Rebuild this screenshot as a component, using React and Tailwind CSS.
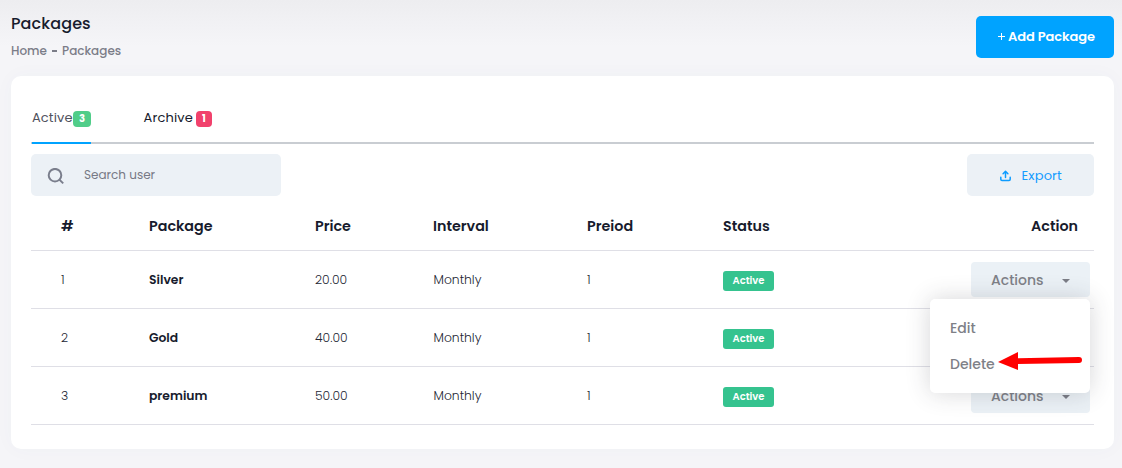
const rows = [
  { id: '1', name: 'Silver', price: '20.00' },
  { id: '2', name: 'Gold', price: '40.00' },
  { id: '3', name: 'premium', price: '50.00' },
];

const grid = 'grid grid-cols-[118px_166px_118px_154px_136px_1fr_auto] items-center border-b border-[#dfdfe6]';

function SearchIcon() {
  return (
    <svg width="18" height="18" viewBox="0 0 18 18" fill="none" stroke="#7a7e8c" strokeWidth="2">
      <circle cx="8" cy="7.2" r="6.3" />
      <path d="M12.4 11.6L16.2 15.4" />
    </svg>
  );
}

function UploadIcon() {
  return (
    <svg width="12" height="12" viewBox="0 0 12 12" fill="none" stroke="#0d9cff" strokeWidth="1.5" strokeLinecap="round" strokeLinejoin="round">
      <path d="M5.5 7.6V1.8M3.1 3.7L5.5 1.3L7.9 3.7" />
      <path d="M0.8 7.2V9.2Q0.8 10.4 2 10.4H9Q10.2 10.4 10.2 9.2V7.2" />
    </svg>
  );
}

function ActionsButton() {
  return (
    <button className="mr-1 flex h-[35px] w-[119px] items-center rounded bg-[#ebf1f6] pt-px pl-5 text-[14px] font-medium text-[#7e8087]">
      <span className="w-[71px] text-left">Actions</span>
      <svg className="mt-px" width="8" height="4" viewBox="0 0 8 4" fill="#7b7d86"><path d="M0 0H8L4 4Z" /></svg>
    </button>
  );
}

function ActionsMenu() {
  return (
    <div className="absolute top-[37px] right-1 z-10 flex h-[94px] w-40 flex-col gap-[1px] rounded-[5px] bg-white pt-[11px] pl-5 text-[14px] font-medium text-[#7e8087] shadow-[0_0_25px_rgba(50,50,60,0.2)]">
      <span className="h-[35px] leading-[36px]">Edit</span>
      <div className="flex h-[35px] items-start">
        <span className="w-[48px] leading-[37px]">Delete</span>
        <svg className="mt-[5px] shrink-0" width="85" height="20" viewBox="0 0 85 20" fill="#ff0000">
          <path d="M0 11L20 1V7.2L81 6Q84 6 84 9T81 12L20 13V19Z" />
        </svg>
      </div>
    </div>
  );
}

export default function App() {
  return (
    <div className="h-[468px] w-[1122px] overflow-hidden bg-[linear-gradient(#ededf0,#f5f5f8_46px)] pr-2 pl-[11px] font-['Poppins','Inter',sans-serif] text-[#171b2d]">
      <header className="flex h-[76px] items-start justify-between pt-[11px]">
        <div>
          <h1 className="h-[24px] pt-px text-[16px] leading-[24px] font-medium tracking-[0.1px]">Packages</h1>
          <nav className="mt-[6px] flex text-[12px] leading-[20px] font-medium text-[#7b7d88]">
            <span className="w-[40px]">Home</span>
            <span className="flex w-[11px] items-center pl-px">
              <span className="h-[2px] w-[5px] bg-[#7b7d88]" />
            </span>
            <span>Packages</span>
          </nav>
        </div>
        <button className="mt-[5px] flex h-[42px] w-[138px] items-center rounded-[5px] bg-[#00a3ff] pl-[22px] text-[13px] font-semibold text-white">
          <svg width="8" height="8" viewBox="0 0 8 8" stroke="white" strokeWidth="1"><path d="M0 3.5H7M3.5 0V7" /></svg>
          <span className="ml-[2px] tracking-[-0.08px]">Add Package</span>
        </button>
      </header>

      <main className="h-[373px] rounded-[10px] bg-white px-5 shadow-[0_0_20px_rgba(76,87,125,0.03)]">
        <div className="flex h-[68px] items-start border-b-2 border-[#c9cdd2] text-[13px]">
          <div className="ml-[1px] flex h-[68px] w-[59px] border-b-2 border-[#00a3ff] pt-[31px] text-[#50525e]">
            <span className="w-[41px] leading-[21px] tracking-[0.1px]">Active</span>
            <span className="mt-[4px] h-4 w-[18px] rounded bg-[#50cd89] text-center text-[10px] leading-4 font-bold text-white">3</span>
          </div>
          <div className="ml-[52px] flex pt-[31px]">
            <span className="w-[53px] pl-[0.5px] leading-[21px] tracking-[0.15px]">Archive</span>
            <span className="mt-[4px] h-4 w-4 rounded bg-[#f1416c] text-center text-[10px] leading-4 font-bold text-white">1</span>
          </div>
        </div>

        <div className="mt-[10px] flex h-[42px] justify-between">
          <div className="flex w-[250px] items-center rounded-[5px] bg-[#ecf1f6] pl-4 text-[12px] text-[#777985]">
            <span className="mt-[3px]"><SearchIcon /></span>
            <span className="ml-[19px]">Search user</span>
          </div>
          <button className="flex w-[127px] items-center rounded-[5px] bg-[#ecf1f6] pl-[33px] text-[13px] text-[#159cff]">
            <span className="mt-[2px]"><UploadIcon /></span>
            <span className="mt-px ml-[9.5px] tracking-[0.15px]">Export</span>
          </button>
        </div>

        <div className={`${grid} h-[55px] pt-[8px] text-[14.3px] font-semibold`}>
          <span className="pl-[30px]">#</span>
          <span>Package</span>
          <span>Price</span>
          <span>Interval</span>
          <span>Preiod</span>
          <span>Status</span>
          <span className="pr-4">Action</span>
        </div>
        {rows.map((row, i) => (
          <div key={row.id} className={`${grid} h-[58px] text-[12.35px] font-light text-[#242734]`}>
            <span className="pt-[2px] pl-[30px]">{row.id}</span>
            <span className="pt-[2px] font-semibold text-[#171b2d]">{row.name}</span>
            <span className="pt-[2px]">{row.price}</span>
            <span className="pt-[2px] pl-[0.5px]">Monthly</span>
            <span className="pt-[2px]">1</span>
            <span className="mt-[3px] h-5 w-[51px] rounded-[3px] bg-[#35c38f] text-center text-[10px] leading-5 font-semibold text-white">Active</span>
            <div className="relative">
              <ActionsButton />
              {i === 0 && <ActionsMenu />}
            </div>
          </div>
        ))}
      </main>
    </div>
  );
}
